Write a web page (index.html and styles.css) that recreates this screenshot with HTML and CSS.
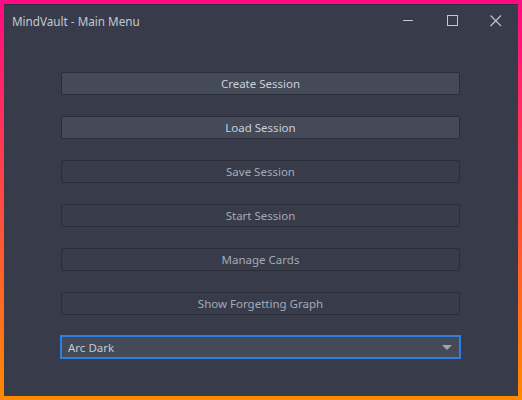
FILE: index.html
```html
<!DOCTYPE html>
<html>
<head>
<meta charset="utf-8">
<link rel="stylesheet" href="styles.css">
</head>
<body>
<div class="window">
  <div class="titlebar">
    <div class="title">MindVault - Main Menu</div>
    <div class="controls">
      <div class="ctl"><svg width="12" height="12" viewBox="0 0 12 12"><path d="M1 5.5H11" stroke="#c3c7cf" stroke-width="1"/></svg></div>
      <div class="ctl"><svg width="12" height="12" viewBox="0 0 12 12"><rect x="1.5" y="0.5" width="10" height="10" fill="none" stroke="#c3c7cf" stroke-width="1"/></svg></div>
      <div class="ctl"><svg width="12" height="12" viewBox="0 0 12 12"><path d="M0.5 0.5L11 11M11 0.5L0.5 11" stroke="#c3c7cf" stroke-width="1.1"/></svg></div>
    </div>
  </div>
  <div class="menu">
    <div class="btn active">Create Session</div>
    <div class="btn active">Load Session</div>
    <div class="btn">Save Session</div>
    <div class="btn">Start Session</div>
    <div class="btn">Manage Cards</div>
    <div class="btn">Show Forgetting Graph</div>
    <div class="combo">
      <span>Arc Dark</span>
      <svg width="10" height="5" viewBox="0 0 10 5"><path d="M0 0H10L5 5Z" fill="#9ea4ae"/></svg>
    </div>
  </div>
</div>
</body>
</html>
```
FILE: styles.css
```css
html, body {
  margin: 0;
  padding: 0;
}
body {
  width: 522px;
  height: 400px;
  box-sizing: border-box;
  padding: 4px;
  background: linear-gradient(to bottom, #ff0a84 0%, #ff8a00 100%);
  font-family: "Noto Sans", "Open Sans", sans-serif;
  font-size: 11.5px;
}
.window {
  width: 514px;
  height: 392px;
  background: #383c4a;
  box-sizing: border-box;
  border-top: 1px solid #2e313c;
  display: flex;
  flex-direction: column;
}
.titlebar {
  height: 31px;
  display: flex;
  align-items: center;
  justify-content: space-between;
}
.title {
  padding-left: 8px;
  color: #c3c8d0;
  font-size: 11.7px;
}
.controls {
  display: flex;
  height: 100%;
}
.ctl {
  width: 44px;
  display: flex;
  align-items: center;
  justify-content: center;
}
.menu {
  padding: 36px 0 0 57px;
  display: flex;
  flex-direction: column;
  gap: 21px;
}
.btn {
  width: 399px;
  height: 23px;
  box-sizing: border-box;
  border: 1px solid #2b2e39;
  border-radius: 2px;
  display: flex;
  align-items: center;
  justify-content: center;
  color: #a4aab5;
  background: #383c4a;
}
.btn.active {
  background: #444a58;
  color: #cbd0d8;
}
.combo {
  width: 401px;
  height: 24px;
  margin: -1px 0 0 -1px;
  box-sizing: border-box;
  border: 2px solid #2f7fe0;
  background: #444a58;
  display: flex;
  align-items: center;
  justify-content: space-between;
  padding: 0 7px 0 6px;
  color: #c3c9d2;
}
```
